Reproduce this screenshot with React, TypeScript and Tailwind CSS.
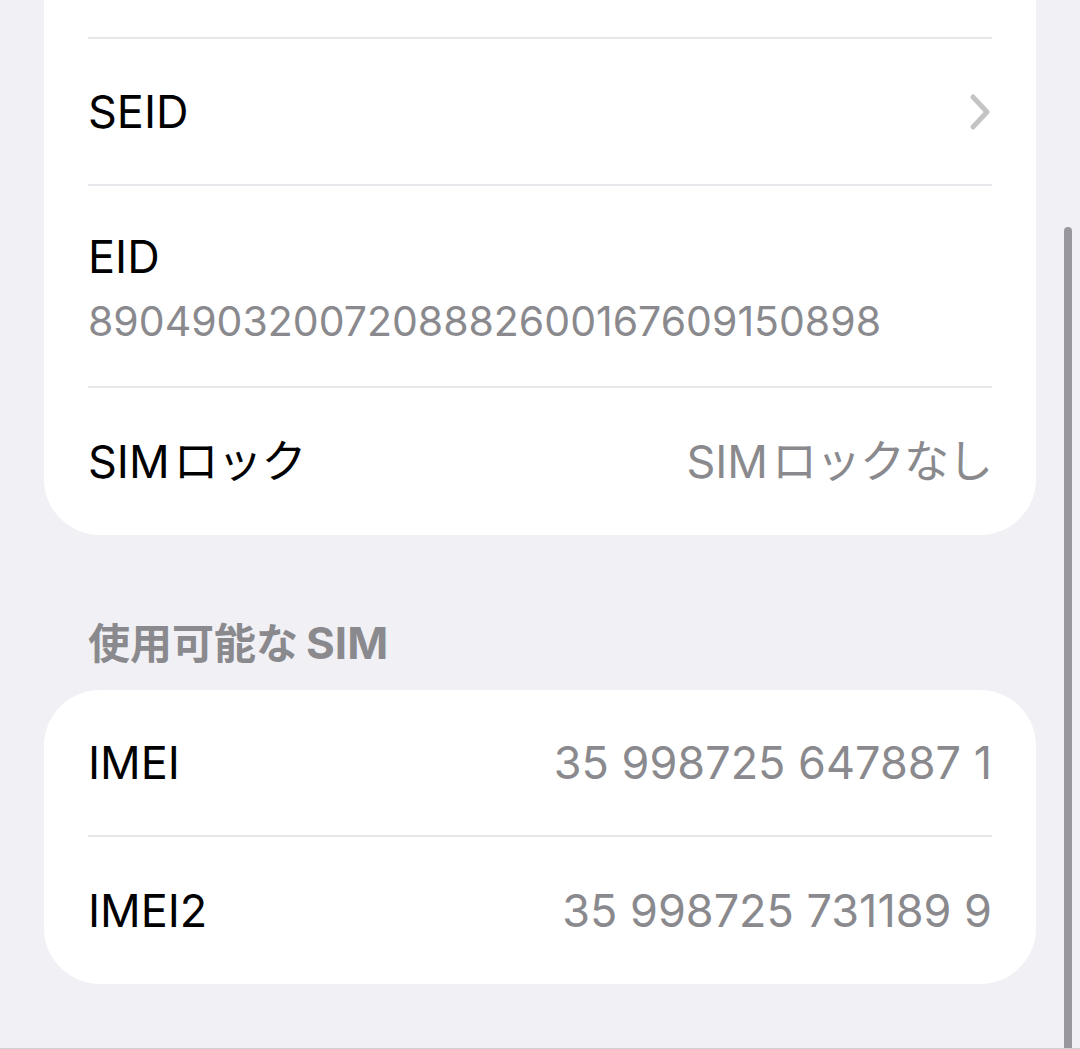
const font = { fontFamily: 'Inter, "Noto Sans CJK JP", sans-serif' };

function Chevron() {
  return (
    <svg width="22" height="38" viewBox="0 0 22 38" fill="none" className="mr-[1px]">
      <polyline points="4,4 18,19 4,34" stroke="#c4c4c7" strokeWidth="5" strokeLinecap="round" strokeLinejoin="round" />
    </svg>
  );
}

function Row({ label, value, chevron, last }: { label: React.ReactNode; value?: React.ReactNode; chevron?: boolean; last?: boolean }) {
  return (
    <div className={`flex h-[147px] items-center justify-between ${last ? "" : "border-b-2 border-[#e6e6eb]"}`}>
      <span className="text-[45px] text-black">{label}</span>
      {value && <span className="text-[45px] text-[#8a8a8e]">{value}</span>}
      {chevron && <Chevron />}
    </div>
  );
}

export default function App() {
  return (
    <div className="relative h-[1049px] overflow-hidden border-b border-[#d0cfd4] bg-[#f1f0f5]" style={font}>
      <div className="mx-[44px] rounded-b-[56px] bg-white px-[44px]">
        <div className="h-[39px] border-b-2 border-[#e6e6eb]" />
        <Row label="SEID" chevron />
        <div className="flex flex-col gap-[8px] border-b-2 border-[#e6e6eb] pb-[37px] pt-[43px]">
          <span className="text-[45px] leading-[56px] text-black">EID</span>
          <span className="text-[41px] leading-[56px] text-[#8a8a8e]">89049032007208882600167609150898</span>
        </div>
        <Row
          label={<>SIM<span className="ml-[4px] tracking-[-1px]">ロック</span></>}
          value={<>SIM<span className="ml-[4px] tracking-[-1px]">ロックなし</span></>}
          last
        />
      </div>

      <p className="px-[88px] pb-[24px] pt-[86px] text-[42px] font-bold leading-[44px] text-[#8a8a8e]">
        使用可能な<span className="ml-[8px] text-[44px]">SIM</span>
      </p>

      <div className="mx-[44px] rounded-[56px] bg-white px-[44px]">
        <Row label="IMEI" value="35 998725 647887 1" />
        <Row label="IMEI2" value="35 998725 731189 9" last />
      </div>

      <div className="absolute bottom-0 right-[8px] top-[227px] w-[8px] rounded-t-full bg-[#98979d]" />
    </div>
  );
}
